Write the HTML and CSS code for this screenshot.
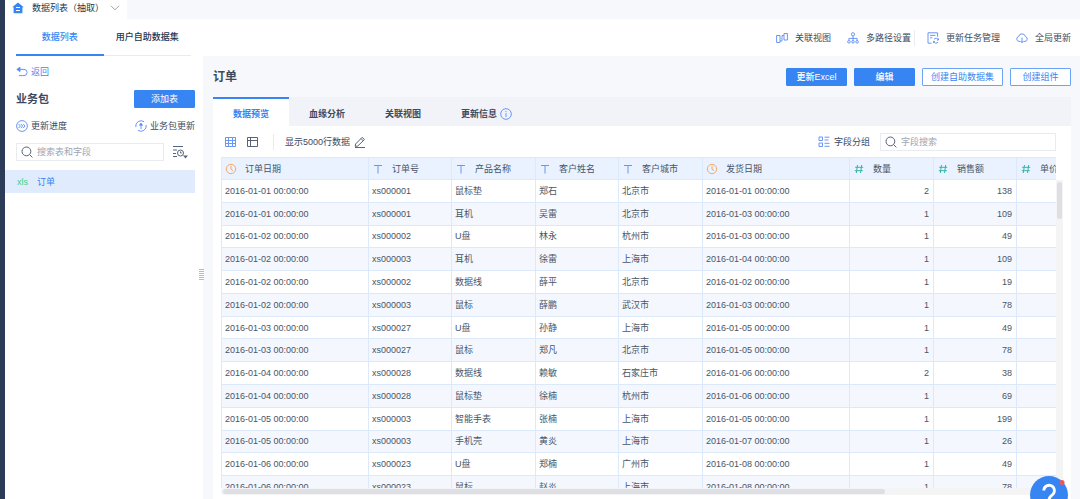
FILE: index.html
```html
<!DOCTYPE html>
<html>
	<head>
		<meta charset="UTF-8">
		<meta name="viewport" content="width=device-width,initial-scale=1.0">
		<title>数据列表</title>
		<link rel="stylesheet" href="styles.css">
	</head>
	<body>
		<div class="rail"></div>
		<div class="app">
			<div class="topbar">
				<div class="page-tab">
					<svg class="home" viewBox="0 0 12 12"><path d="M6 .5L.2 5.2h1.400V11.200h8.800V5.200h1.400z" fill="#3685f2"/><path d="M4 5.500h4M4 8.500h4" stroke="#fff"/></svg>
					<span>数据列表（抽取）</span>
					<svg class="arrow" viewBox="0 0 10 6"><path d="M1 .8l4 4 4-4" fill="none" stroke="#7d899c" stroke-width=".8"/></svg>
				</div>
			</div>
			<div class="header">
				<nav class="main-nav">
					<a href="#" class="active">数据列表</a>
					<a href="#">用户自助数据集</a>
				</nav>
				<div class="actions">
					<button class="action">
						<svg class="icon" viewBox="0 0 12 12"><path d="M.6 3.500h3.400v7H.6zM8 1.500h3.400v6.500H8zM4 9h2V3.500h2" /></svg>关联视图
					</button>
					<button class="action">
						<svg class="icon" viewBox="0 0 12 12"><circle cx="6" cy="2.300" r="1.600"/><circle cx="1.900" cy="9.800" r="1.300"/><circle cx="6" cy="9.800" r="1.300"/><circle cx="10.100" cy="9.800" r="1.300"/><path d="M6 4v4.500M1.900 8.500V6.400h8.200v2.100"/></svg>多路径设置
					</button>
					<i class="line"></i>
					<button class="action">
						<svg class="icon" viewBox="0 0 12 12"><path d="M4.600 11.200H1V.8h9.600v4M3 3.400h5.400M3 5.800h2.400M11.400 8a2.400 2.400 0 0 0-4.400-.6M6.600 9.400a2.400 2.400 0 0 0 4.400.6M11.500 6.400V8H10M6.500 11V9.400H8"/></svg>更新任务管理
					</button>
					<button class="action">
						<svg class="icon" viewBox="0 0 12 12"><path d="M4.200 9.400H3A2.500 2.500 0 0 1 2.600 4.500a3.500 3.500 0 0 1 6.800 0A2.500 2.500 0 0 1 9 9.400H7.800M6 5.600v5M4.400 9L6 10.700 7.600 9"/></svg>全局更新
					</button>
				</div>
			</div>
			<div class="body">
				<aside class="sidebar">
					<a href="#" class="back">
						<svg class="icon" viewBox="0 0 12 12"><path d="M2 3.400h6a2.900 2.900 0 0 1 0 6.200H3"/><path d="M.8 3.400L4 1.200v4.400z" fill="#4a86f0"/></svg>返回
					</a>
					<div class="row">
						<h2>业务包</h2>
						<button class="btn primary">添加表</button>
					</div>
					<div class="row links">
						<button class="action">
							<svg class="icon" viewBox="0 0 12 12"><circle cx="6" cy="6" r="5.400"/><path d="M2.600 4l1.800 2-1.800 2M4.900 4l1.800 2-1.800 2M7.200 4L9 6 7.200 8"/></svg>更新进度
						</button>
						<button class="action">
							<svg class="icon" viewBox="0 0 12 12"><path d="M.8 7A5.300 5.300 0 0 1 9 1.700M11.200 5A5.300 5.300 0 0 1 3 10.300M6 9V3.600"/><path d="M6 2.800L8.200 5.600H3.800z" fill="#4a86f0" stroke="none"/></svg>业务包更新
						</button>
					</div>
					<div class="row find">
						<label class="search">
							<svg class="icon dark" viewBox="0 0 12 12"><circle cx="5.400" cy="5.400" r="4.400"/><path d="M8.600 8.600l2.800 2.800"/></svg>
							<input type="text" placeholder="搜索表和字段" aria-label="搜索表和字段">
						</label>
						<button class="sort" aria-label="排序">
							<svg viewBox="0 0 16 14"><path d="M1 1.500h10M1 5h4M1 8.500h3M1 11.500h4" /><circle cx="8.500" cy="8" r="3"/><path d="M8.500 6.500V8h1.300"/><path d="M11 10.600h5l-2.500 3z" fill="#56637a" stroke="none"/></svg>
						</button>
					</div>
					<a href="#" class="item"><span class="xls">xls</span>订单</a>
					<i class="drag"></i>
				</aside>
				<main class="main">
					<div class="title">
						<h1>订单</h1>
						<div class="btns">
							<button class="btn primary bold">更新Excel</button>
							<button class="btn primary bold">编辑</button>
							<button class="btn wide">创建自助数据集</button>
							<button class="btn">创建组件</button>
						</div>
					</div>
					<nav class="tabs">
						<a href="#" class="active">数据预览</a>
						<a href="#">血缘分析</a>
						<a href="#">关联视图</a>
						<a href="#">更新信息<svg class="icon" viewBox="0 0 12 12"><circle cx="6" cy="6" r="5.300"/><path d="M6 5.200v3.800M6 3v1.200"/></svg></a>
					</nav>
					<div class="panel">
						<div class="toolbar">
							<svg class="icon" viewBox="0 0 12 12"><path d="M.5 1.500h10v9H.5zM.5 4.500h10M.5 7.500h10M3.500 1.500v9M7.500 1.500v9" /></svg>
							<svg class="icon dark" viewBox="0 0 12 12"><path d="M.5 1.500h10v9H.5zM.5 4.500h10M3.500 1.500v9"/></svg>
							<i class="line"></i>
							<span>显示5000行数据</span>
							<svg class="icon dark edit" viewBox="0 0 12 12"><path d="M1.600 8L8.200 1.300l2.200 2.200L3.800 10l-2.600.4zM7 2.600l2.200 2.200M1 11.500h10"/></svg>
							<button class="action group">
								<svg class="icon" viewBox="0 0 12 12"><path d="M1 1h3.500v3.500H1zM1 7h3.500v3.500H1zM6.500 1.200h5M6.500 4h4M6.500 7.300h5M6.500 10.300h5"/></svg>字段分组
							</button>
							<label class="search">
								<svg class="icon dark" viewBox="0 0 12 12"><circle cx="5.400" cy="5.400" r="4.400"/><path d="M8.600 8.600l2.800 2.800"/></svg>
								<input type="text" placeholder="字段搜索" aria-label="字段搜索">
							</label>
						</div>
						<div class="grid">
							<div class="view">
								<table>
									<colgroup><col class="date"><col><col><col><col><col class="date"><col><col><col></colgroup>
									<thead>
										<tr>
											<th><svg class="icon time" viewBox="0 0 12 12"><circle cx="6" cy="6" r="4.700"/><path d="M6 3v3.200l2 1.400"/></svg>订单日期</th>
											<th><svg class="icon" viewBox="0 0 12 12"><path d="M2 2.500h8M6 2.500v8"/></svg>订单号</th>
											<th><svg class="icon" viewBox="0 0 12 12"><path d="M2 2.500h8M6 2.500v8"/></svg>产品名称</th>
											<th><svg class="icon" viewBox="0 0 12 12"><path d="M2 2.500h8M6 2.500v8"/></svg>客户姓名</th>
											<th><svg class="icon" viewBox="0 0 12 12"><path d="M2 2.500h8M6 2.500v8"/></svg>客户城市</th>
											<th><svg class="icon time" viewBox="0 0 12 12"><circle cx="6" cy="6" r="4.700"/><path d="M6 3v3.200l2 1.400"/></svg>发货日期</th>
											<th><svg class="icon num" viewBox="0 0 12 12"><path d="M4.500 2L3.300 10M8.700 2L7.500 10M2.200 4.300h8M1.800 7.700h8"/></svg>数量</th>
											<th><svg class="icon num" viewBox="0 0 12 12"><path d="M4.500 2L3.300 10M8.700 2L7.500 10M2.200 4.300h8M1.800 7.700h8"/></svg>销售额</th>
											<th><svg class="icon num" viewBox="0 0 12 12"><path d="M4.500 2L3.300 10M8.700 2L7.500 10M2.200 4.300h8M1.800 7.700h8"/></svg>单价</th>
										</tr>
									</thead>
									<tbody>
										<tr><td>2016-01-01 00:00:00</td><td>xs000001</td><td>鼠标垫</td><td>郑石</td><td>北京市</td><td>2016-01-01 00:00:00</td><td>2</td><td>138</td><td></td></tr>
										<tr><td>2016-01-01 00:00:00</td><td>xs000001</td><td>耳机</td><td>吴雷</td><td>北京市</td><td>2016-01-03 00:00:00</td><td>1</td><td>109</td><td></td></tr>
										<tr><td>2016-01-02 00:00:00</td><td>xs000002</td><td>U盘</td><td>林永</td><td>杭州市</td><td>2016-01-03 00:00:00</td><td>1</td><td>49</td><td></td></tr>
										<tr><td>2016-01-02 00:00:00</td><td>xs000003</td><td>耳机</td><td>徐雷</td><td>上海市</td><td>2016-01-04 00:00:00</td><td>1</td><td>109</td><td></td></tr>
										<tr><td>2016-01-02 00:00:00</td><td>xs000002</td><td>数据线</td><td>薛平</td><td>北京市</td><td>2016-01-02 00:00:00</td><td>1</td><td>19</td><td></td></tr>
										<tr><td>2016-01-02 00:00:00</td><td>xs000003</td><td>鼠标</td><td>薛鹏</td><td>武汉市</td><td>2016-01-03 00:00:00</td><td>1</td><td>78</td><td></td></tr>
										<tr><td>2016-01-03 00:00:00</td><td>xs000027</td><td>U盘</td><td>孙静</td><td>上海市</td><td>2016-01-05 00:00:00</td><td>1</td><td>49</td><td></td></tr>
										<tr><td>2016-01-03 00:00:00</td><td>xs000027</td><td>鼠标</td><td>郑凡</td><td>北京市</td><td>2016-01-05 00:00:00</td><td>1</td><td>78</td><td></td></tr>
										<tr><td>2016-01-04 00:00:00</td><td>xs000028</td><td>数据线</td><td>赖敏</td><td>石家庄市</td><td>2016-01-06 00:00:00</td><td>2</td><td>38</td><td></td></tr>
										<tr><td>2016-01-04 00:00:00</td><td>xs000028</td><td>鼠标垫</td><td>徐楠</td><td>杭州市</td><td>2016-01-06 00:00:00</td><td>1</td><td>69</td><td></td></tr>
										<tr><td>2016-01-05 00:00:00</td><td>xs000003</td><td>智能手表</td><td>张楠</td><td>上海市</td><td>2016-01-05 00:00:00</td><td>1</td><td>199</td><td></td></tr>
										<tr><td>2016-01-05 00:00:00</td><td>xs000003</td><td>手机壳</td><td>黄炎</td><td>上海市</td><td>2016-01-07 00:00:00</td><td>1</td><td>26</td><td></td></tr>
										<tr><td>2016-01-06 00:00:00</td><td>xs000023</td><td>U盘</td><td>郑楠</td><td>广州市</td><td>2016-01-08 00:00:00</td><td>1</td><td>49</td><td></td></tr>
										<tr><td>2016-01-06 00:00:00</td><td>xs000023</td><td>鼠标</td><td>赵炎</td><td>上海市</td><td>2016-01-08 00:00:00</td><td>1</td><td>78</td><td></td></tr>
									</tbody>
								</table>
							</div>
							<div class="bar-y"><i></i></div>
							<div class="bar-x"><i></i></div>
						</div>
					</div>
				</main>
			</div>
		</div>
		<button class="help" aria-label="帮助">
			<svg viewBox="0 0 38 38"><path d="M13.800 14.500a5.300 5.300 0 1 1 8.500 4.300c-2.200 1.500-3.300 2.400-3.300 5.200" fill="none" stroke="#fff" stroke-width="2.800"/><circle cx="19" cy="29" r="1.800" fill="#fff"/><circle cx="32" cy="6.500" r="2.500" fill="#f0555a"/></svg>
		</button>
	</body>
</html>
```
FILE: styles.css
```css
*{margin:0;padding:0;box-sizing:border-box;}
body{
	display:flex;
	height:100vh;
	overflow:hidden;
	color:#3d4a60;
	background:#fff;
	font:9px/16px "Liberation Sans","Noto Sans CJK SC",sans-serif;
}
a{color:inherit;text-decoration:none;}
i{display:block;}
button,input{font:inherit;color:inherit;border:0;background:none;}
svg{display:block;flex:none;}
.rail{
	flex:none;
	width:5px;
	background:#2c3c58;
}
.app{
	display:flex;
	flex-direction:column;
	flex:1;
	min-width:0;
}
.icon{
	width:12px;
	height:12px;
	fill:none;
	stroke:#6a96f6;
	stroke-width:1;
}
.icon.dark{stroke:#56637a;}
.icon.time{stroke:#f5a866;}
.icon.num{stroke:#35b5a5;}
.line{
	width:1px;
	height:16px;
	background:#e8ebf0;
}

/*顶部*/
.topbar{
	display:flex;
	flex:none;
	height:19px;
	background:#f6f8fb;
}
.page-tab{
	display:flex;
	align-items:center;
	width:122px;
	padding:0 7px 3px;
	background:#fff;
	color:#26344c;
}
.page-tab .home{width:12px;height:12px;margin-right:8px;}
.page-tab .arrow{width:10px;height:6px;margin-left:6px;}
.header{
	display:flex;
	flex:none;
	justify-content:space-between;
	height:37px;
	padding:0 9px 0 11px;
}
.main-nav{
	display:flex;
	width:175px;
}
.main-nav a{
	flex:1;
	line-height:36px;
	text-align:center;
	font-weight:500;
	color:#26344c;
	border-bottom:1px solid #e8ebf0;
}
.main-nav .active{
	color:#3685f2;
	border-bottom:2px solid #3685f2;
}
.actions{
	display:flex;
	align-items:center;
	gap:16px;
}
.actions .line{margin:0 -4px 0 -13px;}
.action{
	display:flex;
	align-items:center;
	gap:7px;
	white-space:nowrap;
}
.body{
	display:flex;
	flex:1;
	min-height:0;
}

/*左侧*/
.sidebar{
	position:relative;
	flex:none;
	width:198px;
	padding:8px 8px 0 11px;
}
.back{
	display:flex;
	align-items:center;
	gap:3px;
	margin-bottom:10px;
	color:#4a86f0;
}
.row{
	display:flex;
	align-items:center;
	justify-content:space-between;
}
.row h2{font-size:11px;}
.links{margin:10px 0 9px;}
.links .action{gap:3px;}
.btn{
	min-width:61px;
	height:18px;
	padding:0 7px;
	border:1px solid #6ba4f6;
	border-radius:1px;
	line-height:16px;
	color:#3685f2;
	background:#fff;
}
.btn.primary{
	color:#fff;
	border-color:#3685f2;
	background:#3685f2;
}
.btn.wide{min-width:81px;}
.btn.bold{font-weight:500;}
.search{
	display:flex;
	align-items:center;
	gap:4px;
	width:148px;
	height:18px;
	padding:0 4px;
	border:1px solid #e8ebf0;
	background:#fff;
}
.search input{
	flex:1;
	min-width:0;
	outline:none;
}
.search input::placeholder{color:#9ba5b5;}
.find{padding-right:7px;}
.sort svg{
	width:16px;
	height:14px;
	fill:none;
	stroke:#56637a;
}
.item{
	display:flex;
	align-items:center;
	gap:9px;
	height:23px;
	margin:9px 0 0 -11px;
	padding-left:12px;
	color:#3685f2;
	background:#e0ebfd;
}
.xls{
	width:11px;
	color:#3fcf8e;
}
.drag{
	position:absolute;
	right:-1px;
	top:50%;
	width:5px;
	height:11px;
	margin-top:-9px;
	background:repeating-linear-gradient(#b4bcc8 0 1px,#fff 1px 2px);
}

/*右侧*/
.main{
	display:flex;
	flex-direction:column;
	flex:1;
	min-width:0;
	padding:0 9px 0 10px;
	background:#f6f8fb;
}
.title{
	display:flex;
	flex:none;
	align-items:center;
	justify-content:space-between;
	height:41px;
}
.title h1{font-size:12px;}
.btns{
	display:flex;
	gap:7px;
}
.tabs{
	display:flex;
	flex:none;
	height:29px;
	background:#f1f3f8;
}
.tabs a{
	display:flex;
	align-items:center;
	gap:3px;
	padding:2px 20px 0;
	font-weight:bold;
	border-top:2px solid transparent;
}
.tabs .active{
	color:#3685f2;
	background:#fff;
	border-top-color:#3685f2;
}
.panel{
	display:flex;
	flex-direction:column;
	flex:1;
	min-height:0;
	padding:0 8px 4px;
	background:#fff;
}
.toolbar{
	display:flex;
	flex:none;
	align-items:center;
	gap:10px;
	height:31px;
	padding:0 7px 0 4px;
}
.toolbar .line{margin:0 1px 0 4px;}
.toolbar .edit{margin-left:-6px;}
.toolbar .group{
	gap:4px;
	margin-left:auto;
}
.toolbar .search{width:176px;}
.grid{
	display:grid;
	grid-template-columns:minmax(0,1fr) 7px;
	grid-template-rows:minmax(0,1fr) 7px;
	flex:1;
	min-height:0;
}
.view{overflow:hidden;}
table{
	width:880px;
	height:342px;
	table-layout:fixed;
	border-collapse:separate;
	border-spacing:0;
	border-left:1px solid #dbe9fb;
	color:#485468;
}
col{width:84px;}
col:nth-child(even){width:83px;}
col.date{width:147px;}
th,td{
	padding:0 4px 0 3px;
	border-right:1px solid #dbe9fb;
	border-bottom:1px solid #dbe9fb;
	text-align:left;
	font-weight:normal;
	line-height:12px;
	white-space:nowrap;
}
th{
	height:23px;
	background:#e9f2fe;
	border-top:1px solid #dbe9fb;
}
th .icon{
	display:inline-block;
	margin-right:8px;
	vertical-align:top;
}
td:nth-child(n+7){text-align:right;}
tbody tr:nth-child(even){background:#f4f8fe;}
.bar-y{
	margin-top:23px;
	padding:2px 1px;
	background:#f4f4f5;
}
.bar-y i{
	height:37px;
	border-radius:3px;
	background:#dddfe4;
}
.bar-x{
	grid-column:1 / 3;
	padding:1px 2px;
	border-radius:3px;
	background:#f4f4f5;
}
.bar-x i{
	width:79%;
	height:5px;
	border-radius:3px;
	background:#dddfe4;
}
.help{
	position:fixed;
	right:12px;
	bottom:-15px;
	width:38px;
	height:38px;
	border-radius:50%;
	background:#3685f2;
}
```
